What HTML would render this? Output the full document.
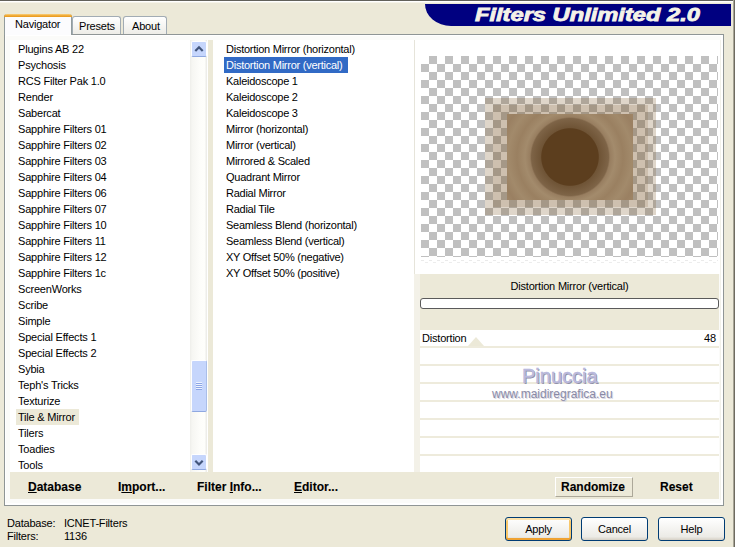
<!DOCTYPE html>
<html><head><meta charset="utf-8">
<style>
*{margin:0;padding:0;box-sizing:border-box}
html,body{width:735px;height:547px;overflow:hidden;background:#ECE9D8}
body{position:relative;font-family:"Liberation Sans",sans-serif;font-size:11px;color:#000;letter-spacing:-0.2px}
.a{position:absolute}
.tb{font-weight:bold;font-size:12px;-webkit-text-stroke:0.1px #000}
.t{position:absolute;white-space:nowrap;line-height:16px;padding-top:1px}
</style></head><body>
<!-- window edges -->
<div class="a" style="left:0;top:0;width:735px;height:1px;background:#62615B"></div>
<div class="a" style="left:0;top:1px;width:733px;height:1px;background:#FFFFFF"></div>
<div class="a" style="left:0;top:2px;width:733px;height:1px;background:#F6F4EA"></div>
<div class="a" style="left:733px;top:0;width:1px;height:547px;background:#A8A597"></div>
<div class="a" style="left:734px;top:0;width:1px;height:547px;background:#6E6B60"></div>

<!-- banner -->
<div class="a" style="left:425px;top:4px;width:306px;height:22px;background:#000080;border-bottom-left-radius:26px 22px"></div>
<div class="t" style="left:475px;top:5px;padding-top:0;line-height:24px;font:italic bold 18px 'Liberation Sans';color:#F4F2E8;transform:scaleX(1.315);transform-origin:0 0;letter-spacing:0;-webkit-text-stroke:0.8px #F4F2E8">Filters Unlimited 2.0</div>

<!-- tabs -->
<div class="a" style="left:72px;top:16px;width:49px;height:19px;background:linear-gradient(#FFFFFF,#ECEBE5);border:1px solid #A2ACB4;border-bottom:none;border-radius:3px 3px 0 0"></div>
<div class="t" style="left:79px;top:16.5px">Presets</div>
<div class="a" style="left:123px;top:16px;width:44px;height:19px;background:linear-gradient(#FFFFFF,#ECEBE5);border:1px solid #A2ACB4;border-bottom:none;border-radius:3px 3px 0 0"></div>
<div class="t" style="left:132px;top:16.5px">About</div>

<!-- panel -->
<div class="a" style="left:4px;top:34px;width:720px;height:472px;background:#FBFBF9;border:1px solid #8F9595;box-shadow:inset 1px 1px 0 #FFFFFF,inset -2px -2px 0 #FFFFFF"></div>
<div class="a" style="left:4px;top:14px;width:68px;height:21px;background:#FCFCFE;border:1px solid #919B9C;border-bottom:none;border-top:none;border-radius:3px 3px 0 0"></div>
<div class="a" style="left:4px;top:14px;width:68px;height:3px;background:linear-gradient(#F8D07E,#EEA52E 60%,#E89A1E);border-radius:3px 3px 0 0"></div>
<div class="t" style="left:15px;top:14.5px">Navigator</div>

<!-- left list -->
<div class="a" style="left:10px;top:40px;width:198px;height:432px;background:#FFFFFF"></div>
<div class="a" style="left:16px;top:409px;width:63px;height:16px;background:#ECE9D8"></div>
<div class="t" style="left:18px;top:40px;line-height:16px">
Plugins AB 22<br>Psychosis<br>RCS Filter Pak 1.0<br>Render<br>Sabercat<br>Sapphire Filters 01<br>Sapphire Filters 02<br>Sapphire Filters 03<br>Sapphire Filters 04<br>Sapphire Filters 06<br>Sapphire Filters 07<br>Sapphire Filters 10<br>Sapphire Filters 11<br>Sapphire Filters 12<br>Sapphire Filters 1c<br>ScreenWorks<br>Scribe<br>Simple<br>Special Effects 1<br>Special Effects 2<br>Sybia<br>Teph's Tricks<br>Texturize<br>Tile &amp; Mirror<br>Tilers<br>Toadies<br>Tools
</div>
<!-- scrollbar -->
<div class="a" style="left:190px;top:40px;width:17px;height:432px;background:linear-gradient(90deg,#EEEEEA,#F6F6F2 2px,#FDFDFA 10px,#FEFEFB 15px,#EDEDE9 16px)"></div>
<div class="a" style="left:191px;top:41px;width:16px;height:16px;background:#C6D6FC;border:1px solid #FFFFFF;border-bottom-color:#8FA8E0;border-radius:2px"></div>
<svg class="a" style="left:191px;top:41px" width="16" height="16"><path d="M4.3 10 L8 6.3 L11.7 10" stroke="#42557B" stroke-width="2.2" fill="none"/></svg>
<div class="a" style="left:191px;top:360px;width:16px;height:52px;background:#C6D6FC;border:1px solid #FFFFFF;border-right-color:#A9BEE9;border-bottom-color:#8FA8E0;border-radius:2px"></div>
<svg class="a" style="left:191px;top:381px" width="16" height="10"><path d="M5 1.5h6M5 3.5h6M5 5.5h6M5 7.5h6" stroke="#EEF4FE" stroke-width="1"/><path d="M5 2.5h6M5 4.5h6M5 6.5h6M5 8.5h6" stroke="#8CA5E6" stroke-width="1"/></svg>
<div class="a" style="left:191px;top:454px;width:16px;height:16px;background:#C6D6FC;border:1px solid #FFFFFF;border-bottom-color:#8FA8E0;border-radius:2px"></div>
<svg class="a" style="left:191px;top:454px" width="16" height="16"><path d="M4.3 6.8 L8 10.5 L11.7 6.8" stroke="#42557B" stroke-width="2.2" fill="none"/></svg>

<div class="a" style="left:208px;top:40px;width:5px;height:432px;background:#ECE9D8"></div>
<!-- middle list -->
<div class="a" style="left:213px;top:40px;width:201px;height:432px;background:#FFFFFF"></div>
<div class="a" style="left:224px;top:57px;width:124px;height:16px;background:#316AC5"></div>
<div class="t" style="left:226px;top:40px;line-height:16px;letter-spacing:-0.25px">
Distortion Mirror (horizontal)<br><span style="color:#fff">Distortion Mirror (vertical)</span><br>Kaleidoscope 1<br>Kaleidoscope 2<br>Kaleidoscope 3<br>Mirror (horizontal)<br>Mirror (vertical)<br>Mirrored &amp; Scaled<br>Quadrant Mirror<br>Radial Mirror<br>Radial Tile<br>Seamless Blend (horizontal)<br>Seamless Blend (vertical)<br>XY Offset 50% (negative)<br>XY Offset 50% (positive)
</div>

<!-- right panel -->
<div class="a" style="left:414px;top:40px;width:1px;height:234px;background:#E6E4DA"></div>
<div class="a" style="left:414px;top:274px;width:6px;height:198px;background:#F3F1E8"></div>
<div class="a" style="left:415px;top:40px;width:307px;height:234px;background:#FFFFFF"></div>
<div class="a" style="left:421px;top:56px;width:297px;height:201px;background:conic-gradient(#C0C0C0 25%,#FFFFFF 0 50%,#C0C0C0 0 75%,#FFFFFF 0) 0 0/16px 16px"></div>

<div class="a" style="left:421px;top:260px;width:297px;height:1px;background:repeating-linear-gradient(90deg,#EAEAEA 0 3px,transparent 3px 8px)"></div>
<div class="a" style="left:421px;top:262px;width:297px;height:1px;background:repeating-linear-gradient(90deg,transparent 0 4px,#EDEDED 4px 7px,transparent 7px 8px)"></div>
<div class="a" style="left:720px;top:40px;width:1px;height:460px;background:#F2F1EA"></div>
<!-- preview image -->
<div class="a" style="left:485px;top:98px;width:171px;height:117px;background:rgba(120,82,35,0.24)"></div>
<div class="a" style="left:493px;top:105px;width:155px;height:102px;background:rgba(120,82,35,0.16)"></div>
<div class="a" style="left:507px;top:114px;width:126px;height:86px;background:radial-gradient(circle at 63px 43px,#5C3E1E 0,#5C3E1E 28.3px,#6F5436 29.3px,#7E6447 38.5px,#987E60 40px,#A38B6C 45px,#9A8061 53px,#A28A6B 62px,#9A8062 70px,#A18869 80px,#9C8263 90px)"></div>

<!-- params -->
<div class="a" style="left:420px;top:274px;width:299px;height:56px;background:#ECE9D8"></div>
<div class="t" style="left:420px;top:277px;width:299px;text-align:center">Distortion Mirror (vertical)</div>
<div class="a" style="left:420px;top:298px;width:299px;height:11px;background:#FFFFFF;border:1px solid #5A5A5A;border-radius:3px"></div>
<div class="a" style="left:420px;top:330px;width:299px;height:142px;background:#FFFFFF"></div>
<div class="a" style="left:420px;top:346px;width:299px;height:2px;background:#EEEBDC"></div>
<div class="a" style="left:420px;top:364px;width:299px;height:2px;background:#EEEBDC"></div>
<div class="a" style="left:420px;top:382px;width:299px;height:2px;background:#EEEBDC"></div>
<div class="a" style="left:420px;top:400px;width:299px;height:2px;background:#EEEBDC"></div>
<div class="a" style="left:420px;top:418px;width:299px;height:2px;background:#EEEBDC"></div>
<div class="a" style="left:420px;top:436px;width:299px;height:2px;background:#EEEBDC"></div>
<div class="a" style="left:420px;top:454px;width:299px;height:2px;background:#EEEBDC"></div>
<div class="t" style="left:422px;top:328.5px">Distortion</div>
<div class="t" style="left:704px;top:328.5px">48</div>
<svg class="a" style="left:466px;top:336px" width="20" height="11"><path d="M2 10 L10 1 L18 10 Z" fill="#ECE9D8"/></svg>

<!-- watermark -->
<div class="t" style="left:522px;top:364.5px;padding-top:0;line-height:24px;font:20px 'Liberation Sans';color:#BDBDDF;letter-spacing:0;-webkit-text-stroke:0.5px #B4B4D8;text-shadow:1px 1px 0 #8E8EA6">Pinuccia</div>
<div class="t" style="left:492px;top:387px;padding-top:0;line-height:14px;font:12px 'Liberation Sans';color:#8A8AA6;letter-spacing:0;text-shadow:1px 1px 0 #D8D8E4">www.maidiregrafica.eu</div>

<!-- toolbars -->
<div class="a" style="left:10px;top:472px;width:709px;height:27px;background:#ECE9D8"></div>
<div class="t tb" style="left:28px;top:477.5px;letter-spacing:0px"><u>D</u>atabase</div>
<div class="t tb" style="left:118px;top:477.5px;letter-spacing:0px">I<u>m</u>port...</div>
<div class="t tb" style="left:197px;top:477.5px;letter-spacing:0px">Filter <u>I</u>nfo...</div>
<div class="t tb" style="left:294px;top:477.5px;letter-spacing:0px"><u>E</u>ditor...</div>
<div class="a" style="left:555px;top:477px;width:78px;height:20px;background:#ECE9D8;border:1px solid #FFFFFF;border-right-color:#ACA899;border-bottom-color:#ACA899"></div>
<div class="t tb" style="left:561px;top:477.5px;letter-spacing:0px">Randomize</div>
<div class="t tb" style="left:660px;top:477.5px;letter-spacing:0px">Reset</div>

<!-- status -->
<div class="t" style="left:7px;top:515.5px;line-height:13px">Database:<br>Filters:</div>
<div class="t" style="left:64px;top:515.5px;line-height:13px">ICNET-Filters<br>1136</div>

<!-- buttons -->
<div class="a" style="left:505px;top:517px;width:67px;height:24px;border:1px solid #003C74;border-radius:3px;background:linear-gradient(#FFFFFF,#ECEBE6 85%,#D6D0C5);box-shadow:inset 0 2px 0 #FDE3AC,inset 0 -2px 0 #EFA232,inset 2px 0 0 #F8C76A,inset -2px 0 0 #F8C76A"></div>
<div class="t" style="left:505px;top:519.5px;width:67px;text-align:center">Apply</div>
<div class="a" style="left:581px;top:517px;width:67px;height:24px;border:1px solid #003C74;border-radius:3px;background:linear-gradient(#FFFFFF,#ECEBE6 85%,#D6D0C5)"></div>
<div class="t" style="left:581px;top:519.5px;width:67px;text-align:center">Cancel</div>
<div class="a" style="left:658px;top:517px;width:67px;height:24px;border:1px solid #003C74;border-radius:3px;background:linear-gradient(#FFFFFF,#ECEBE6 85%,#D6D0C5)"></div>
<div class="t" style="left:658px;top:519.5px;width:67px;text-align:center">Help</div>
</body></html>
